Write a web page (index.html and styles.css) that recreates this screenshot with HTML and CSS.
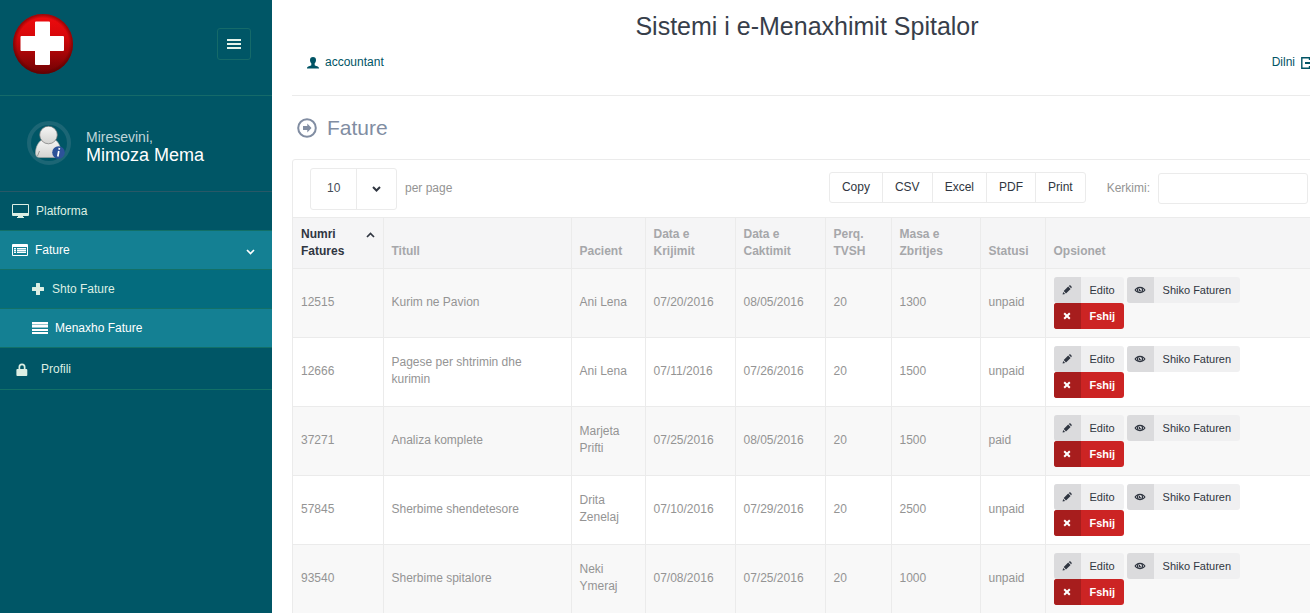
FILE: index.html
```html
<!DOCTYPE html>
<html lang="sq">
<head>
<meta charset="utf-8">
<title>Sistemi i e-Menaxhimit Spitalor</title>
<link rel="stylesheet" href="styles.css">
</head>
<body>
<svg class="sprite" aria-hidden="true">
  <symbol id="i-pencil" viewBox="0 0 10 10"><path d="M.6 9.400l.5-2.500L3.200 9zM1.700 6.100L6.200 1.500 8.600 3.900 4 8.400zM6.800.9L8 .1 9.900 2 9.200 3.300z"/></symbol>
  <symbol id="i-eye" viewBox="0 0 12 10"><path fill-rule="evenodd" d="M6 1.800C3 1.800 1 4 .5 5c.5 1 2.500 3.200 5.500 3.200S11 6 11.500 5C11 4 9 1.800 6 1.800zM6 3a2 2 0 1 1 0 4 2 2 0 0 1 0-4zM3.300 3.400a3 3 0 0 0 0 3.200L1.800 5zM8.700 3.400a3 3 0 0 1 0 3.200L10.200 5z"/><path d="M6 3.800v1.400h1.300A1.300 1.300 0 1 1 6 3.800z"/></symbol>
  <symbol id="i-cross" viewBox="0 0 10 10"><path fill="none" stroke="currentColor" stroke-width="2" d="M2.200 2.200l5.600 5.600M7.800 2.200L2.200 7.800"/></symbol>
</svg>
<div class="app">
  <aside class="sidebar">
    <div class="brand">
      <svg class="logo" viewBox="0 0 60 60" role="img" aria-label="Logo">
        <defs>
          <linearGradient id="red" x1="0" y1="0" x2="0" y2="1"><stop offset="0" stop-color="#f00b0e"/><stop offset=".35" stop-color="#d9080b"/><stop offset="1" stop-color="#6d0203"/></linearGradient>
          <radialGradient id="edge"><stop offset=".86" stop-color="#500" stop-opacity="0"/><stop offset="1" stop-color="#500" stop-opacity=".6"/></radialGradient>
        </defs>
        <circle cx="30" cy="30" r="30" fill="url(#red)"/><circle cx="30" cy="30" r="30" fill="url(#edge)"/>
        <path fill="#fff" d="M23 7.500h13a1 1 0 0 1 1 1V22h13a1 1 0 0 1 1 1v13a1 1 0 0 1-1 1H37v13a1 1 0 0 1-1 1H23a1 1 0 0 1-1-1V37H8.500a1 1 0 0 1-1-1V23a1 1 0 0 1 1-1H22V8.500a1 1 0 0 1 1-1z"/>
      </svg>
      <button class="toggle" type="button" aria-label="Menu"><svg width="14" height="10" viewBox="0 0 14 10"><path fill="currentColor" d="M0 0h14v2H0zM0 4h14v2H0zM0 8h14v2H0z"/></svg></button>
    </div>
    <div class="user">
      <svg class="avatar" viewBox="0 0 44 44" role="img" aria-label="Avatar">
        <defs><linearGradient id="body" x1="0" y1="0" x2="0" y2="1"><stop offset="0" stop-color="#f6f6f5"/><stop offset="1" stop-color="#d3d3d1"/></linearGradient></defs>
        <circle cx="22" cy="22" r="20" fill="none" stroke="#1c6675" stroke-width="4"/>
        <path fill="url(#body)" stroke="#a8a8a4" stroke-width=".6" d="M8.500 32c0-6 3-11.500 7-13.500h12c4 2 6.500 7.500 6.500 13.500 0 3-2 4.500-5 4.500H13c-3 0-4.500-1.500-4.500-4.500z"/>
        <path fill="none" stroke="#8b8b87" stroke-width=".8" d="M10.500 35l2-5"/>
        <circle cx="21.500" cy="14" r="8.800" fill="url(#body)" stroke="#777" stroke-width=".7"/>
        <circle cx="31.500" cy="31.500" r="6.300" fill="#2c5299"/>
        <path fill="none" stroke="#fff" stroke-width="1.700" d="M32.400 27l-.3 1.600M31.800 30l-1 5.500"/>
      </svg>
      <a class="who" href="#"><span class="hello">Miresevini,</span><strong class="name">Mimoza Mema</strong></a>
    </div>
    <nav class="menu">
      <a class="item" href="#"><svg width="17" height="14" viewBox="0 0 17 14"><path fill="currentColor" fill-rule="evenodd" d="M1 0h15a1 1 0 0 1 1 1v10a1 1 0 0 1-1 1h-5v1h1v1H5v-1h1v-1H1a1 1 0 0 1-1-1V1a1 1 0 0 1 1-1zM1 1v8h15V1z"/></svg>Platforma</a>
      <a class="item open" href="#"><svg width="16" height="12" viewBox="0 0 16 12"><path fill="currentColor" fill-rule="evenodd" d="M1 0h14a1 1 0 0 1 1 1v10a1 1 0 0 1-1 1H1a1 1 0 0 1-1-1V1a1 1 0 0 1 1-1zM1 3v8h14V3z"/><path fill="currentColor" d="M2 4h2v1H2zM5 4h9v1H5zM2 6h2v1H2zM5 6h9v1H5zM2 8h2v1H2zM5 8h9v1H5z"/><path fill="currentColor" opacity=".5" d="M2 5h2v1H2zM5 5h9v1H5zM2 7h2v1H2zM5 7h9v1H5z"/></svg>Fature<svg class="caret" width="9" height="6" viewBox="0 0 9 6"><path fill="none" stroke="currentColor" stroke-width="1.700" d="M1 1l3.500 3.500L8 1"/></svg></a>
      <a class="item sub" href="#"><svg width="12" height="12" viewBox="0 0 12 12"><path fill="currentColor" d="M4 .6q0-.6.6-.6h2.800q.6 0 .6.6V4h3.400q.6 0 .6.600v2.800q0 .6-.6.600H8v3.400q0 .6-.6.600H4.600q-.6 0-.6-.6V8H.6Q0 8 0 7.400V4.600Q0 4 .6 4H4z"/></svg>Shto Fature</a>
      <a class="item sub current" href="#"><svg width="16" height="12" viewBox="0 0 16 12"><path fill="currentColor" d="M0 0h16v2H0zM0 3h16v2H0zM0 7h16v2H0zM0 10h16v2H0z"/><path fill="currentColor" opacity=".55" d="M0 2h16v1H0zM0 5h16v1H0z"/></svg>Menaxho Fature</a>
      <a class="item profile" href="#"><svg width="12" height="14" viewBox="0 0 12 14"><path fill="currentColor" fill-rule="evenodd" d="M2.500 6V4a3.500 3.500 0 0 1 7 0v2h.9q.9 0 .9.900v5.200q0 .9-.9.900H1.300q-.9 0-.9-.9V6.900Q.4 6 1.300 6zM4.200 6h3.600V4a1.800 1.800 0 0 0-3.600 0z"/></svg>Profili</a>
    </nav>
  </aside>
  <main class="main">
    <header class="top">
      <h1 class="title">Sistemi i e-Menaxhimit Spitalor</h1>
      <div class="links">
        <a href="#"><svg width="12" height="12" viewBox="0 0 12 12"><path fill="currentColor" d="M6 0c2 0 3 1.300 3 3 0 1.500-.6 2.600-1.300 3.300v1.900c.5.800 4.300.8 4.300 2.800v.5H0V11c0-2 3.800-2 4.300-2.800V6.300C3.600 5.600 3 4.500 3 3c0-1.700 1-3 3-3z"/></svg>accountant</a>
        <a href="#">Dilni<svg width="14" height="12" viewBox="0 0 14 12"><path fill="none" stroke="currentColor" stroke-width="1.400" d="M8.500 3V.8H.8v10.400h7.700V9"/><path fill="currentColor" d="M4 5h5V2.500L13 6 9 9.500V7H4z"/></svg></a>
      </div>
    </header>
    <h2 class="page-title"><svg width="20" height="20" viewBox="0 0 20 20"><circle cx="10" cy="10" r="8.800" fill="none" stroke="currentColor" stroke-width="2"/><path fill="currentColor" d="M6 7.900h4.300V5.600L14.500 10l-4.200 4.400v-2.300H6z"/></svg>Fature</h2>
    <section class="panel">
      <div class="toolbar">
        <div class="select"><select id="len"><option>10</option><option>25</option><option>50</option></select><svg width="9" height="6" viewBox="0 0 9 6"><path fill="none" stroke="currentColor" stroke-width="2" d="M1 1l3.500 3.500L8 1"/></svg></div>
        <label class="muted" for="len">per page</label>
        <div class="exports"><button type="button">Copy</button><button type="button">CSV</button><button type="button">Excel</button><button type="button">PDF</button><button type="button">Print</button></div>
        <label class="muted" for="q">Kerkimi:</label>
        <input class="search" id="q" type="text">
      </div>
      <table class="grid">
        <colgroup><col class="c-num"><col class="c-title"><col class="c-patient"><col class="c-date"><col class="c-date"><col class="c-vat"><col class="c-sum"><col class="c-status"><col></colgroup>
        <thead><tr>
          <th class="sorted"><span class="sort">Numri Fatures<svg width="9" height="6" viewBox="0 0 9 6"><path fill="none" stroke="currentColor" stroke-width="1.700" d="M1 5l3.500-3.500L8 5"/></svg></span></th>
          <th>Titull</th><th>Pacient</th><th>Data e Krijimit</th><th>Data e Caktimit</th><th>Perq. TVSH</th><th>Masa e Zbritjes</th><th>Statusi</th><th>Opsionet</th>
        </tr></thead>
        <tbody id="rows"></tbody>
      </table>
    </section>
  </main>
</div>
<script src="app.js"></script>
</body>
</html>
```
FILE: styles.css
```css
* { box-sizing: border-box; }
body { margin: 0; overflow-x: hidden; background: #fff; color: #949494; font: 12px/17px "Liberation Sans", Arial, sans-serif; }
a { color: inherit; text-decoration: none; }
button, input, select { font: inherit; }
svg { flex: none; display: block; }
.sprite { position: absolute; width: 0; height: 0; }
/* the content column runs slightly past the right edge of the window */
.app { display: flex; width: calc(100% + 32px); min-height: 100vh; }

.sidebar { flex: none; width: 272px; background: #005666; color: #dcefe4; }
.brand { display: flex; align-items: center; justify-content: space-between; height: 96px; padding: 0 21px 8px 13px; border-bottom: 1px solid #156a69; }
.logo { width: 60px; height: 60px; }
.toggle { display: grid; place-items: center; width: 34px; height: 32px; padding: 0; border: 1px solid #156a69; border-radius: 3px; background: none; color: #e4f3ea; }
.user { display: flex; align-items: center; gap: 15px; height: 96px; padding: 0 27px 2px; border-bottom: 1px solid #285867; }
.avatar { width: 44px; height: 44px; }
.who { display: flex; flex-direction: column; padding-top: 8px; }
.hello { font-size: 14px; color: #bfd5d9; }
.name { font-size: 18px; line-height: 19px; font-weight: 400; color: #fff; }
.item { display: flex; align-items: center; gap: 7px; height: 39px; padding: 0 12px; border-bottom: 1px solid #127067; }
.open, .current { background: #148093; color: #fff; }
.sub { gap: 8px; padding-left: 32px; }
.sub.current { gap: 7px; }
.sub:not(.current) { background: #046c7e; }
.profile { height: 42px; gap: 13px; padding: 2px 12px 0 16px; }
.caret { margin: 4px 5px 0 auto; }

.main { flex: 1; min-width: 0; padding: 0 20px; }
.top { height: 96px; padding-top: 10px; border-bottom: 1px solid #ebebeb; }
.title { margin: 0; text-align: center; font-size: 25px; line-height: 32px; font-weight: 400; color: #373e4a; }
.links { display: flex; justify-content: space-between; padding: 12px 7px 0 15px; color: #015465; }
.links a { display: flex; align-items: center; gap: 6px; }
.page-title { display: flex; align-items: center; gap: 10px; height: 63px; margin: 0; padding-left: 5px; font-size: 21px; font-weight: 400; color: #818da2; }

.panel { border: 1px solid #ebebeb; border-radius: 3px 3px 0 0; }
.toolbar { display: flex; align-items: center; gap: 8px; height: 57px; padding: 0 13px 0 17px; }
.select { position: relative; width: 87px; height: 42px; }
.select select { appearance: none; width: 100%; height: 100%; padding: 0 16px; border: 1px solid #ebebeb; border-radius: 3px; background: linear-gradient(#ebebeb, #ebebeb) 45px 0 / 1px 100% no-repeat #fff; color: #454c57; }
.select svg { position: absolute; right: 16px; top: 18px; color: #303641; pointer-events: none; }
.muted { color: #949494; }
.exports { display: flex; margin: 0 13px 2px auto; border: 1px solid #ebebeb; border-radius: 3px; }
.exports button { height: 29px; padding: 0 12px; border: 0; background: none; color: #303641; }
.exports button + button { border-left: 1px solid #ebebeb; }
.search { width: 150px; height: 31px; padding: 6px 12px; border: 1px solid #ebebeb; border-radius: 3px; color: #555; }

.grid { width: 100%; table-layout: fixed; border-collapse: collapse; }
.c-num { width: 90px; } .c-title { width: 188px; } .c-patient { width: 74px; } .c-date { width: 90px; }
.c-vat { width: 66px; } .c-sum { width: 89px; } .c-status { width: 65px; }
.grid th, .grid td { padding: 8px; border: 1px solid #ebebeb; text-align: left; }
.grid td { padding: 7px 8px 9px; }
.grid td:last-child { padding: 8px; }
.grid th:first-child, .grid td:first-child { border-left: 0; }
.grid th { vertical-align: bottom; background: #f5f5f6; color: #a6a7aa; }
.grid .sorted { color: #303641; }
.sort { display: flex; justify-content: space-between; align-items: flex-start; }
.sort svg { margin-top: 6px; }
.grid tbody tr:nth-child(odd) { background: #f8f8f8; }
.actions { display: flex; gap: 3px; }
.btn { display: flex; align-items: center; height: 26px; padding: 0; border: 0; border-radius: 3px; overflow: hidden; background: #f0f0f1; color: #303641; font-size: 11px; }
.btn i { display: grid; place-items: center; width: 27px; height: 26px; background: #dbdbdd; }
.btn svg { width: 10px; height: 10px; fill: currentColor; }
.btn .eye { width: 12px; }
.btn span { padding: 0 9px; }
.btn.danger { background: #cc2424; color: #fff; font-weight: 700; }
.btn.danger i { background: #a71d1d; }
```
FILE: app.js
```js
const invoices = [
  ["12515", "Kurim ne Pavion", "Ani Lena", "07/20/2016", "08/05/2016", "20", "1300", "unpaid"],
  ["12666", "Pagese per shtrimin dhe kurimin", "Ani Lena", "07/11/2016", "07/26/2016", "20", "1500", "unpaid"],
  ["37271", "Analiza komplete", "Marjeta Prifti", "07/25/2016", "08/05/2016", "20", "1500", "paid"],
  ["57845", "Sherbime shendetesore", "Drita Zenelaj", "07/10/2016", "07/29/2016", "20", "2500", "unpaid"],
  ["93540", "Sherbime spitalore", "Neki Ymeraj", "07/08/2016", "07/25/2016", "20", "1000", "unpaid"]
];
const button = (icon, text, kind = "") =>
  `<button type="button" class="btn ${kind}"><i><svg class="${icon}"><use href="#i-${icon}"/></svg></i><span>${text}</span></button>`;
document.getElementById("rows").innerHTML = invoices.map(row =>
  `<tr>${row.map(value => `<td>${value}</td>`).join("")}<td>
    <div class="actions">${button("pencil", "Edito")}${button("eye", "Shiko Faturen")}</div>
    <div class="actions">${button("cross", "Fshij", "danger")}</div>
  </td></tr>`).join("");
```
